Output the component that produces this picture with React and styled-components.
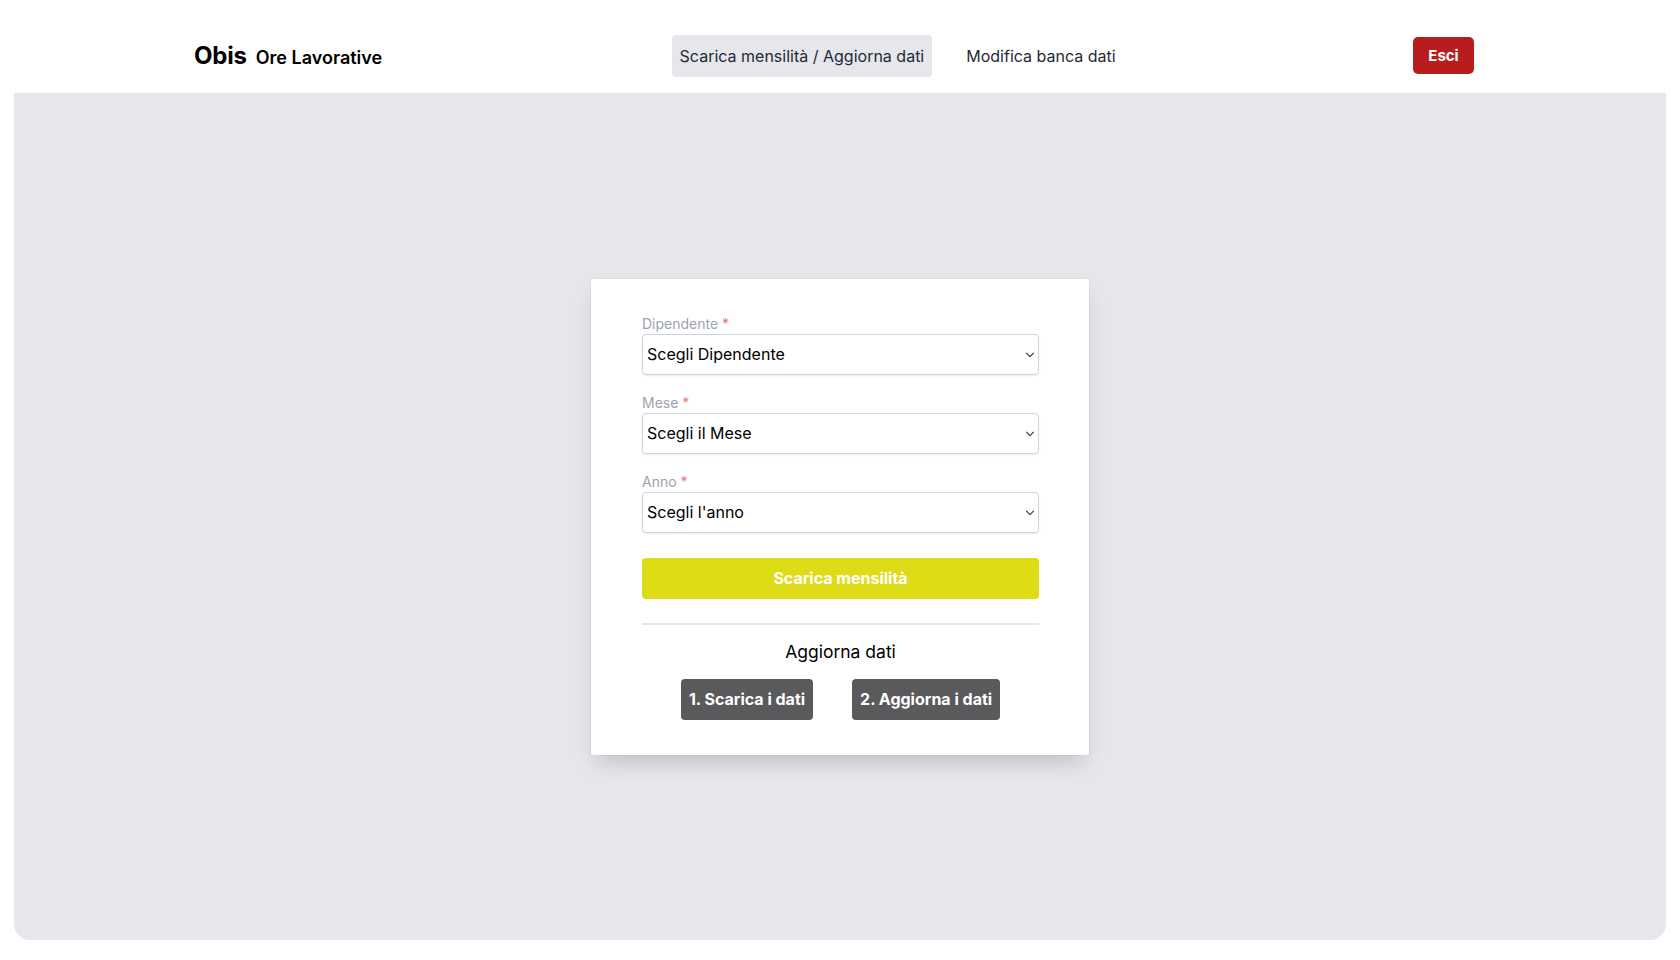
import React, { Component } from 'react';
import styled, { createGlobalStyle } from 'styled-components';

const GlobalStyle = createGlobalStyle`
    html, body {
        margin: 0;
        padding: 0;
        background: #fff;
        font-family: Inter, "Noto Sans", "Liberation Sans", sans-serif;
    }
    * { box-sizing: border-box; }
`;

const Page = styled.div`
    display: flex;
    flex-direction: column;
    height: 960px;
    padding: 0 14px 20px;
`;

const Header = styled.header`
    height: 93px;
    flex-shrink: 0;
    display: flex;
    align-items: center;
    justify-content: space-between;
    padding: 18px 192px 0 180px;
`;

const Brand = styled.div`
    display: flex;
    align-items: baseline;
    gap: 9px;
    color: #000;
    h1 {
        margin: 0;
        font-size: 24px;
        font-weight: 700;
        letter-spacing: -0.2px;
    }
    span {
        font-size: 18px;
        font-weight: 600;
    }
`;

const Nav = styled.nav`
    display: flex;
    align-items: center;
    gap: 26px;
`;

const NavItem = styled.a`
    display: block;
    padding: 11px 8px;
    border-radius: 4px;
    font-size: 16px;
    color: #1f2937;
    background: ${p => (p.active ? '#e5e7eb' : 'transparent')};
    cursor: pointer;
`;

const LogoutButton = styled.button`
    width: 61px;
    height: 37px;
    border: none;
    border-radius: 5px;
    background: #b91c1c;
    color: #fff;
    font-family: inherit;
    font-size: 15px;
    font-weight: 700;
`;

const Main = styled.main`
    flex: 1;
    display: flex;
    align-items: center;
    justify-content: center;
    background: #e5e7eb;
    border-radius: 0 0 16px 16px;
`;

const Card = styled.div`
    width: 498px;
    padding: 35px 50px 35px 51px;
    background: #fff;
    border-radius: 2px;
    box-shadow: 0 12px 22px -6px rgba(0, 0, 0, 0.18), 0 0 0 1px rgba(0, 0, 0, 0.03);
`;

const Field = styled.div`
    display: flex;
    flex-direction: column;
    margin-bottom: 18px;
`;

const Label = styled.label`
    font-size: 14px;
    line-height: 20px;
    color: #9ca3af;
    em {
        font-style: normal;
        color: #f87171;
    }
`;

const SelectWrap = styled.div`
    position: relative;
    svg {
        position: absolute;
        right: 4px;
        top: 18px;
        pointer-events: none;
    }
`;

const Select = styled.select`
    width: 100%;
    height: 41px;
    appearance: none;
    -webkit-appearance: none;
    padding: 0 24px 0 4px;
    border: 1px solid #d1d5db;
    border-radius: 4px;
    background: #fff;
    box-shadow: 0 1px 2px rgba(0, 0, 0, 0.08);
    font-family: inherit;
    font-size: 16px;
    color: #000;
`;

const Button = styled.button`
    height: 41px;
    border: none;
    border-radius: 4px;
    color: #fff;
    font-family: inherit;
    font-size: 16px;
    font-weight: 700;
    background: ${p => p.bg};
    width: ${p => (p.full ? '100%' : 'auto')};
    padding: ${p => (p.full ? '0' : '0 8px')};
    cursor: pointer;
`;

const PrimaryRow = styled.div`
    margin-top: 25px;
`;

const Divider = styled.hr`
    margin: 24px 0 0;
    border: none;
    border-top: 2px solid #e5e7eb;
`;

const SectionTitle = styled.h2`
    margin: 16px 0 17px;
    text-align: center;
    font-size: 17.5px;
    font-weight: 400;
    color: #000;
`;

const ButtonRow = styled.div`
    display: flex;
    justify-content: center;
    gap: 39px;
`;

const Chevron = () => (
    <svg width="10" height="6" viewBox="0 0 10 6" fill="none">
        <path d="M1.5 1.2l3.5 3.5 3.5-3.5" stroke="#333" strokeWidth="1.1" strokeLinecap="round" strokeLinejoin="round" />
    </svg>
);

const fields = [
    { label: 'Dipendente', placeholder: 'Scegli Dipendente' },
    { label: 'Mese', placeholder: 'Scegli il Mese' },
    { label: 'Anno', placeholder: "Scegli l'anno" },
];

export default class App extends Component {
    state = {
        values: {}
    }

    handleChange = (e) => this.setState({ values: { ...this.state.values, [e.target.name]: e.target.value } })

    render() {
        const { values } = this.state
        return (
            <Page>
                <GlobalStyle />
                <Header>
                    <Brand>
                        <h1>Obis</h1>
                        <span>Ore Lavorative</span>
                    </Brand>
                    <Nav>
                        <NavItem active>Scarica mensilità / Aggiorna dati</NavItem>
                        <NavItem>Modifica banca dati</NavItem>
                    </Nav>
                    <LogoutButton>Esci</LogoutButton>
                </Header>
                <Main>
                    <Card>
                        {fields.map(f => (
                            <Field key={f.label}>
                                <Label>{f.label} <em>*</em></Label>
                                <SelectWrap>
                                    <Select
                                        name={f.label}
                                        value={values[f.label] || ''}
                                        onChange={e => this.handleChange(e)}
                                    >
                                        <option value="">{f.placeholder}</option>
                                    </Select>
                                    <Chevron />
                                </SelectWrap>
                            </Field>
                        ))}
                        <PrimaryRow>
                            <Button full bg="#dedc17">Scarica mensilità</Button>
                        </PrimaryRow>
                        <Divider />
                        <SectionTitle>Aggiorna dati</SectionTitle>
                        <ButtonRow>
                            <Button bg="#5a5a5c">1. Scarica i dati</Button>
                            <Button bg="#5a5a5c">2. Aggiorna i dati</Button>
                        </ButtonRow>
                    </Card>
                </Main>
            </Page>
        );
    }
}
